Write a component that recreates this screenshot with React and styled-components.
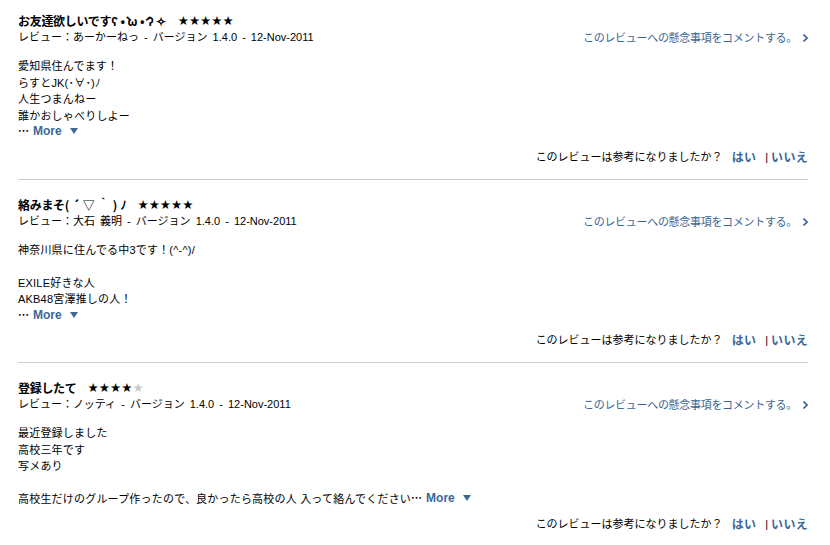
import React from "react";
import styled, { createGlobalStyle } from "styled-components";

const Global = createGlobalStyle`
  html, body { margin: 0; padding: 0; background: #fff; }
  body {
    font-family: "Liberation Sans", "Noto Sans CJK JP", sans-serif;
    font-size: 11px;
    color: #000;
  }
`;

const Page = styled.div`
  width: 790px;
  padding-left: 18px;
`;

const Review = styled.section`
  padding: 17px 0 14px;
  border-bottom: 1px solid ${(p) => (p.$last ? "transparent" : "#c6ced6")};
  &:first-child { padding-top: 13px; }
`;

const Header = styled.div`
  display: flex;
  justify-content: space-between;
  align-items: flex-end;
`;

const TitleBlock = styled.div`
  display: flex;
  flex-direction: column;
`;

const TitleRow = styled.div`
  display: flex;
  align-items: center;
  gap: ${(p) => p.$gap || 9}px;
  height: 16px;
`;

const Title = styled.h3`
  margin: 0;
  font-family: "Noto Sans CJK JP", sans-serif;
  font-size: 12px;
  font-weight: 700;
  line-height: 16px;
  letter-spacing: -0.3px;
`;

const Kao = styled.span`
  letter-spacing: ${(p) => p.$ls}px;
`;

const Stars = styled.span`
  display: inline-flex;
  font-family: "DejaVu Sans", sans-serif;
  font-size: 12.5px;
  line-height: 16px;
`;

const Star = styled.span`
  color: ${(p) => (p.$on ? "#000" : "#c8c8c8")};
`;

const Meta = styled.div`
  line-height: 16px;
  word-spacing: 2px;
`;

const Concern = styled.a`
  display: inline-flex;
  align-items: center;
  gap: 6px;
  color: #3a6494;
  text-decoration: none;
  line-height: 16px;
  letter-spacing: -0.3px;
  margin-bottom: -1px;
`;

const Body = styled.div`
  margin-top: 12px;
`;

const Line = styled.div`
  display: flex;
  align-items: center;
  height: 16.5px;
  white-space: pre;
  letter-spacing: 0.2px;
`;

const Ellipsis = styled.span`
  font-family: "Noto Sans CJK JP", sans-serif;
  font-weight: 700;
  letter-spacing: -1px;
  position: relative;
  top: -1px;
`;

const More = styled.a`
  display: inline-flex;
  align-items: center;
  gap: 5px;
  margin-left: 5px;
  color: #3c6898;
  font-family: "Liberation Sans", sans-serif;
  font-weight: 700;
  font-size: 12px;
  letter-spacing: 0;
  text-decoration: none;
`;

const Helpful = styled.div`
  display: flex;
  justify-content: flex-end;
  align-items: center;
  margin-top: 9px;
  line-height: 16px;
`;

const Vote = styled.a`
  color: #3c6898;
  font-family: "Noto Sans CJK JP", sans-serif;
  font-weight: 700;
  font-size: 12px;
  text-decoration: none;
  margin-left: ${(p) => p.$ml || 0}px;
  letter-spacing: 0.3px;
`;

const Bar = styled.span`
  margin-left: 9px;
  margin-right: 3px;
`;

const Tri = () => (
  <svg width="8" height="6" viewBox="0 0 8 6">
    <path d="M0 0H8L4 6Z" fill="#3c6898" />
  </svg>
);

const Chev = () => (
  <svg width="5" height="8" viewBox="0 0 5 8">
    <path d="M0.5 0.5L4 4L0.5 7.5" stroke="#3a6494" strokeWidth="1.6" fill="none" />
  </svg>
);

const MoreLink = () => (
  <More href="#">
    More <Tri />
  </More>
);

const reviews = [
  {
    title: "お友達欲しいです",
    kao: "ʕ•̀ω•́ʔ✧",
    kaoLs: 2.5,
    gap: 9,
    stars: 5,
    author: "あーかーねっ",
    lines: ["愛知県住んでます！", "らすとJK(･∀･)ﾉ", "人生つまんねー", "誰かおしゃべりしよー"],
    last: "",
  },
  {
    title: "絡みまそ",
    kao: "(´▽｀)ﾉ",
    kaoLs: 3,
    gap: 8,
    stars: 5,
    author: "大石 義明",
    lines: ["神奈川県に住んでる中3です！(^-^)/", "", "EXILE好きな人", "AKB48宮澤推しの人！"],
    last: "",
  },
  {
    title: "登録したて",
    kao: "",
    kaoLs: 0,
    gap: 11,
    stars: 4,
    author: "ノッティ",
    lines: ["最近登録しました", "高校三年です", "写メあり", ""],
    last: "高校生だけのグループ作ったので、良かったら高校の人 入って絡んでください",
  },
];

export default function App() {
  return (
    <>
      <Global />
      <Page>
        {reviews.map((r, i) => (
          <Review key={i} $last={i === reviews.length - 1}>
            <Header>
              <TitleBlock>
                <TitleRow $gap={r.gap}>
                  <Title>
                    {r.title}
                    {r.kao && <Kao $ls={r.kaoLs}>{r.kao}</Kao>}
                  </Title>
                  <Stars>
                    {[0, 1, 2, 3, 4].map((s) => (
                      <Star key={s} $on={s < r.stars}>★</Star>
                    ))}
                  </Stars>
                </TitleRow>
                <Meta>レビュー：{r.author} - バージョン 1.4.0 - 12-Nov-2011</Meta>
              </TitleBlock>
              <Concern href="#">
                このレビューへの懸念事項をコメントする。
                <Chev />
              </Concern>
            </Header>
            <Body>
              {r.lines.map((l, j) => (
                <Line key={j}>{l || " "}</Line>
              ))}
              <Line>
                {r.last}
                <Ellipsis>…</Ellipsis>
                <MoreLink />
              </Line>
            </Body>
            <Helpful>
              このレビューは参考になりましたか？
              <Vote href="#" $ml={9}>はい</Vote>
              <Bar>|</Bar>
              <Vote href="#">いいえ</Vote>
            </Helpful>
          </Review>
        ))}
      </Page>
    </>
  );
}
